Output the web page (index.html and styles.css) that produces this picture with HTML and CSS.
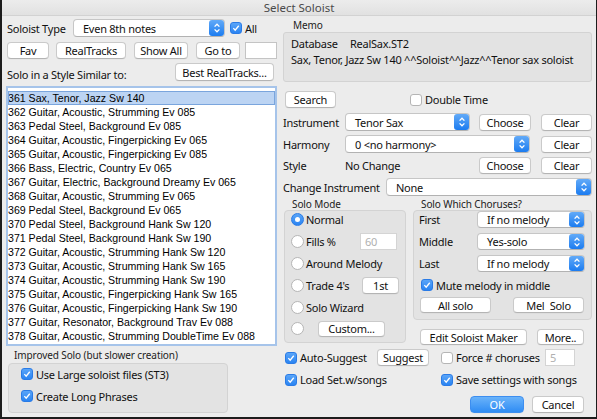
FILE: index.html
```html
<!DOCTYPE html>
<html><head><meta charset="utf-8"><title>Select Soloist</title><link rel="stylesheet" href="styles.css"></head>
<body>
<div class="window">
  <div class="titlebar">Select Soloist</div>
  <div class="main">
    <div class="left">
      <div class="row r1">
        <span class="lbl type-lbl">Soloist Type</span>
        <div class="select s-type"><span class="val">Even 8th notes</span><span class="stepper"><svg viewBox="0 0 10 16" width="10" height="16"><path d="M2.6 6.6 L5 4.2 L7.4 6.6 M2.6 9.4 L5 11.8 L7.4 9.4" fill="none" stroke="#fff" stroke-width="1.3"/></svg></span></div>
        <span class="cb on all-cb"><svg viewBox="0 0 12 12"><path d="M2.8 6.2 L5 8.6 L9.3 3.3" fill="none" stroke="#fff" stroke-width="1.6"/></svg></span><span class="cbtext">All</span>
      </div>
      <div class="row r2">
        <div class="btn b-fav">Fav</div>
        <div class="btn b-rt">RealTracks</div>
        <div class="btn b-show">Show All</div>
        <div class="btn b-goto">Go to</div>
        <span class="field f-goto"></span>
      </div>
      <div class="row r3">
        <span class="lbl">Solo in a Style Similar to:</span>
        <div class="btn b-best">Best RealTracks...</div>
      </div>
      <div class="list">
        <div class="item sel">361 Sax, Tenor, Jazz Sw 140</div>
        <div class="item">362 Guitar, Acoustic, Strumming Ev 085</div>
        <div class="item">363 Pedal Steel, Background Ev 085</div>
        <div class="item">364 Guitar, Acoustic, Fingerpicking Ev 065</div>
        <div class="item">365 Guitar, Acoustic, Fingerpicking Ev 085</div>
        <div class="item">366 Bass, Electric, Country Ev 065</div>
        <div class="item">367 Guitar, Electric, Background Dreamy Ev 065</div>
        <div class="item">368 Guitar, Acoustic, Strumming Ev 065</div>
        <div class="item">369 Pedal Steel, Background Ev 065</div>
        <div class="item">370 Pedal Steel, Background Hank Sw 120</div>
        <div class="item">371 Pedal Steel, Background Hank Sw 190</div>
        <div class="item">372 Guitar, Acoustic, Strumming Hank Sw 120</div>
        <div class="item">373 Guitar, Acoustic, Strumming Hank Sw 165</div>
        <div class="item">374 Guitar, Acoustic, Strumming Hank Sw 190</div>
        <div class="item">375 Guitar, Acoustic, Fingerpicking Hank Sw 165</div>
        <div class="item">376 Guitar, Acoustic, Fingerpicking Hank Sw 190</div>
        <div class="item">377 Guitar, Resonator, Background Trav Ev 088</div>
        <div class="item">378 Guitar, Acoustic, Strumming DoubleTime Ev 088</div>
      </div>
      <div class="glbl imp-lbl">Improved Solo (but slower creation)</div>
      <div class="group improved">
        <div class="crow"><span class="cb on"><svg viewBox="0 0 12 12"><path d="M2.8 6.2 L5 8.6 L9.3 3.3" fill="none" stroke="#fff" stroke-width="1.6"/></svg></span><span class="cbtext">Use Large soloist files (ST3)</span></div>
        <div class="crow"><span class="cb on"><svg viewBox="0 0 12 12"><path d="M2.8 6.2 L5 8.6 L9.3 3.3" fill="none" stroke="#fff" stroke-width="1.6"/></svg></span><span class="cbtext">Create Long Phrases</span></div>
      </div>
    </div>

    <div class="right">
      <div class="glbl memo-lbl">Memo</div>
      <div class="memo">
        <div class="mline"><span class="db">Database</span>RealSax.ST2</div>
        <div class="mline">Sax, Tenor, Jazz Sw 140 ^^Soloist^^Jazz^^Tenor sax soloist</div>
      </div>
      <div class="row search-row">
        <div class="btn b-search">Search</div>
        <span class="cb dt-cb"></span><span class="cbtext">Double Time</span>
      </div>
      <div class="row frow f-instr">
        <span class="flbl">Instrument</span>
        <div class="select s-instr"><span class="val">Tenor Sax</span><span class="stepper"><svg viewBox="0 0 10 16" width="10" height="16"><path d="M2.6 6.6 L5 4.2 L7.4 6.6 M2.6 9.4 L5 11.8 L7.4 9.4" fill="none" stroke="#fff" stroke-width="1.3"/></svg></span></div>
        <div class="btn b-choose">Choose</div>
        <div class="btn b-clear">Clear</div>
      </div>
      <div class="row frow f-harm">
        <span class="flbl">Harmony</span>
        <div class="select s-harm"><span class="val">0 &lt;no harmony&gt;</span><span class="stepper"><svg viewBox="0 0 10 16" width="10" height="16"><path d="M2.6 6.6 L5 4.2 L7.4 6.6 M2.6 9.4 L5 11.8 L7.4 9.4" fill="none" stroke="#fff" stroke-width="1.3"/></svg></span></div>
        <div class="btn b-clear">Clear</div>
      </div>
      <div class="row frow f-style">
        <span class="flbl">Style</span>
        <span class="nochange">No Change</span>
        <div class="btn b-choose">Choose</div>
        <div class="btn b-clear">Clear</div>
      </div>
      <div class="row frow f-change">
        <span class="flbl wide">Change Instrument</span>
        <div class="select s-change"><span class="val">None</span><span class="stepper"><svg viewBox="0 0 10 16" width="10" height="16"><path d="M2.6 6.6 L5 4.2 L7.4 6.6 M2.6 9.4 L5 11.8 L7.4 9.4" fill="none" stroke="#fff" stroke-width="1.3"/></svg></span></div>
      </div>
      <div class="cols">
        <div class="modecol">
          <div class="glbl">Solo Mode</div>
          <div class="group modebox">
            <div class="mrow"><span class="radio on"></span><span class="rtext">Normal</span></div>
            <div class="mrow"><span class="radio"></span><span class="rtext">Fills %</span><span class="field dis f-fills">60</span></div>
            <div class="mrow"><span class="radio"></span><span class="rtext">Around Melody</span></div>
            <div class="mrow"><span class="radio"></span><span class="rtext">Trade 4's</span><div class="btn b-1st">1st</div></div>
            <div class="mrow"><span class="radio"></span><span class="rtext">Solo Wizard</span></div>
            <div class="mrow"><span class="radio"></span><div class="btn b-custom">Custom...</div></div>
          </div>
        </div>
        <div class="chcol">
          <div class="glbl">Solo Which Choruses?</div>
          <div class="group chbox">
            <div class="mrow"><span class="chlbl">First</span><div class="select s-ch"><span class="val">If no melody</span><span class="stepper"><svg viewBox="0 0 10 16" width="10" height="16"><path d="M2.6 6.6 L5 4.2 L7.4 6.6 M2.6 9.4 L5 11.8 L7.4 9.4" fill="none" stroke="#fff" stroke-width="1.3"/></svg></span></div></div>
            <div class="mrow"><span class="chlbl">Middle</span><div class="select s-ch"><span class="val">Yes-solo</span><span class="stepper"><svg viewBox="0 0 10 16" width="10" height="16"><path d="M2.6 6.6 L5 4.2 L7.4 6.6 M2.6 9.4 L5 11.8 L7.4 9.4" fill="none" stroke="#fff" stroke-width="1.3"/></svg></span></div></div>
            <div class="mrow"><span class="chlbl">Last</span><div class="select s-ch"><span class="val">If no melody</span><span class="stepper"><svg viewBox="0 0 10 16" width="10" height="16"><path d="M2.6 6.6 L5 4.2 L7.4 6.6 M2.6 9.4 L5 11.8 L7.4 9.4" fill="none" stroke="#fff" stroke-width="1.3"/></svg></span></div></div>
            <div class="mrow mute"><span class="cb on"><svg viewBox="0 0 12 12"><path d="M2.8 6.2 L5 8.6 L9.3 3.3" fill="none" stroke="#fff" stroke-width="1.6"/></svg></span><span class="cbtext">Mute melody in middle</span></div>
            <div class="brow"><div class="btn b-all">All solo</div><div class="btn b-mel">Mel&nbsp; Solo</div></div>
          </div>
          <div class="row editrow"><div class="btn b-edit">Edit Soloist Maker</div><div class="btn b-more">More..</div></div>
        </div>
      </div>
      <div class="row opt-row">
        <span class="opt o-auto"><span class="cb on"><svg viewBox="0 0 12 12"><path d="M2.8 6.2 L5 8.6 L9.3 3.3" fill="none" stroke="#fff" stroke-width="1.6"/></svg></span><span class="cbtext">Auto-Suggest</span></span>
        <div class="btn b-suggest">Suggest</div>
        <span class="opt o-force"><span class="cb"></span><span class="cbtext">Force # choruses</span></span>
        <span class="field dis f-force">5</span>
      </div>
      <div class="row opt-row load-row">
        <span class="opt o-load"><span class="cb on"><svg viewBox="0 0 12 12"><path d="M2.8 6.2 L5 8.6 L9.3 3.3" fill="none" stroke="#fff" stroke-width="1.6"/></svg></span><span class="cbtext">Load Set.w/songs</span></span>
        <span class="opt"><span class="cb on"><svg viewBox="0 0 12 12"><path d="M2.8 6.2 L5 8.6 L9.3 3.3" fill="none" stroke="#fff" stroke-width="1.6"/></svg></span><span class="cbtext">Save settings with songs</span></span>
      </div>
      <div class="row okrow">
        <div class="btn b-ok">OK</div>
        <div class="btn b-cancel">Cancel</div>
      </div>
    </div>
  </div>
</div>
</body></html>
```
FILE: styles.css
```css
* { box-sizing: border-box; }
html, body { margin: 0; padding: 0; }
body {
  width: 597px; height: 419px; overflow: hidden; background: #ececec;
  font-family: "Noto Sans", "Open Sans", "DejaVu Sans", sans-serif;
  font-size: 11px; letter-spacing: -0.25px; color: #111;
}
.window {
  width: 597px; height: 419px; background: #ececec;
  border-left: 2px solid #1c1c1c; border-right: 1px solid #1c1c1c; border-bottom: 2px solid #1c1c1c;
  display: flex; flex-direction: column;
}
.titlebar {
  height: 16px; flex: none; text-align: center; line-height: 16px;
  font-size: 11.5px; color: #4a4a4a; letter-spacing: 0;
  background: linear-gradient(#ececec, #e1e1e1);
  border-bottom: 1px solid #d2d2d2;
}
.main { display: flex; padding: 3px 0 0 4px; flex: 1; }
.left { width: 272px; flex: none; display: flex; flex-direction: column; }
.right { width: 309px; margin-left: 5px; flex: none; display: flex; flex-direction: column; }

.row { display: flex; align-items: center; flex: none; }
.lbl { white-space: nowrap; }

/* buttons */
.btn {
  height: 17px; display: flex; align-items: center; justify-content: center;
  background: #fff; border: 1px solid #cacaca; border-bottom-color: #b4b4b4;
  border-radius: 4px; white-space: nowrap; flex: none; color: #111;
  box-shadow: 0 0.5px 0 rgba(0,0,0,0.05);
}
.field {
  height: 17px; background: #fff; border: 1px solid #c4c4c4; flex: none;
  display: flex; align-items: center; padding-left: 4px;
}
.field.dis { color: #b0b0b0; border-color: #d4d4d4; }

/* select */
.select {
  height: 18px; background: #fff; border: 1px solid #c6c6c6; border-bottom-color: #b2b2b2;
  border-radius: 4px; display: flex; align-items: center; flex: none;
}
.select .val { flex: 1; padding-left: 9px; white-space: nowrap; }
.select .stepper {
  width: 15px; height: 16px; border-radius: 3px;
  background: linear-gradient(#62aaf8, #1c7cf0);
  display: flex; align-items: center; justify-content: center; flex: none;
}

/* checkbox / radio */
.cb {
  width: 12px; height: 12px; border-radius: 3px; flex: none;
  background: #fff; border: 1px solid #b5b5b5; display: inline-flex;
}
.cb.on { background: linear-gradient(#5aa5f8, #2a84f2); border-color: #2a7be6; }
.cb svg { width: 10px; height: 10px; }
.cbtext { margin-left: 3px; white-space: nowrap; }
.radio {
  width: 13px; height: 13px; border-radius: 50%; background: #fff; border: 1px solid #b5b5b5; flex: none;
  display: inline-flex; align-items: center; justify-content: center;
}
.radio.on { background: linear-gradient(#5aa5f8, #2a84f2); border-color: #2a7be6; }
.radio.on::after { content: ""; width: 5px; height: 5px; border-radius: 50%; background: #fff; }
.rtext { margin-left: 2px; white-space: nowrap; }

/* left column */
.r1 { height: 18px; }
.type-lbl { width: 67px; padding-left: 1px; }
.s-type { width: 152px; }
.all-cb { margin-left: 5px; }
.r2 { height: 17px; margin-top: 5px; }
.b-fav { width: 42px; margin-left: 1px; }
.b-rt { width: 70px; margin-left: 7px; }
.b-show { width: 54px; margin-left: 8px; }
.b-goto { width: 44px; margin-left: 8px; }
.f-goto { width: 32px; margin-left: 5px; }
.r3 { height: 18px; margin-top: 4px; justify-content: space-between; align-items: flex-end; }
.r3 .lbl { padding-left: 1px; line-height: 13px; }
.b-best { width: 99px; height: 18px; margin-right: 4px; }

.list {
  margin-top: 5px; height: 260px; width: 271px; background: #fff;
  border: 2px solid #a6c4ea; padding-top: 3px; overflow: hidden;
  font-family: "Liberation Sans", Arial, sans-serif; font-size: 10.6px; letter-spacing: 0;
}
.item { height: 14px; line-height: 14px; white-space: nowrap; color: #000; }
.item.sel { background: #bcd4f3; outline: 1px solid #7aa5dd; outline-offset: -1px; }

.glbl { font-size: 10px; color: #222; white-space: nowrap; line-height: 11px; letter-spacing: -0.1px; }
.imp-lbl { margin-top: 3px; padding-left: 8px; height: 13px; line-height: 13px; }
.group { background: #e3e3e3; border: 1px solid #d3d3d3; border-radius: 4px; }
.improved { margin-top: 1px; margin-left: 2px; width: 220px; height: 50px; padding-left: 12px; }
.crow { height: 22px; display: flex; align-items: center; }
.improved .crow:first-child { margin-top: -1px; }

/* right column */
.memo-lbl { height: 13px; line-height: 13px; padding-left: 10px; }
.memo {
  height: 50px; background: #e3e3e3; border: 1px solid #d3d3d3; border-radius: 3px;
  padding: 3px 0 0 7px;
}
.mline { height: 16px; line-height: 16px; white-space: nowrap; }
.db { display: inline-block; width: 59px; }
.search-row { margin-top: 9px; height: 17px; }
.b-search { width: 51px; margin-left: 2px; }
.dt-cb { margin-left: 74px; }
.frow { height: 18px; margin-top: 4px; }
.f-instr { margin-top: 5px; }
.flbl { width: 62px; white-space: nowrap; flex: none; }
.flbl.wide { width: 103px; }
.s-instr { width: 125px; }
.b-choose { width: 52px; margin-left: 9px; }
.b-clear { width: 51px; margin-left: 10px; }
.s-harm { width: 185px; }
.f-harm .b-clear { margin-left: 11px; }
.nochange { width: 125px; flex: none; }
.f-style { height: 17px; }
.s-change { width: 206px; }

.cols { display: flex; align-items: flex-start; margin-top: 3px; }
.modecol { width: 122px; margin-left: 1px; flex: none; }
.modecol .glbl, .chcol .glbl { height: 11px; padding-left: 8px; }
.modebox { height: 133px; padding-left: 6px; padding-right: 8px; }
.mrow { height: 21.8px; display: flex; align-items: center; }
.modebox .mrow:first-child, .chbox .mrow:first-child { margin-top: -2px; }
.f-fills { width: 37px; margin-left: auto; }
.b-1st { width: 37px; margin-left: auto; margin-right: -2px; }
.b-custom { width: 67px; margin-left: 14px; height: 16px; }
.chcol { width: 179px; margin-left: 7px; flex: none; }
.chbox { height: 110px; padding-left: 5px; }
.chlbl { width: 58px; flex: none; }
.s-ch { width: 108px; height: 17px; }
.s-ch .stepper { height: 15px; }
.mute { padding-left: 2px; }
.brow { display: flex; margin-top: 1px; }
.b-all { width: 71px; height: 16px; margin-left: 1px; }
.b-mel { width: 71px; height: 16px; margin-left: 22px; }
.editrow { margin-top: 9px; height: 16px; }
.b-edit { width: 107px; height: 16px; margin-left: 7px; }
.b-more { width: 47px; height: 16px; margin-left: 10px; }

.opt-row { margin-top: 4px; height: 17px; }
.load-row { margin-top: 5px; }
.opt { display: flex; align-items: center; flex: none; }
.o-auto { width: 92px; margin-left: 2px; }
.b-suggest { width: 52px; }
.o-force { width: 104px; margin-left: 12px; }
.f-force { width: 30px; }
.o-load { width: 156px; margin-left: 2px; }
.okrow { margin-top: 8px; height: 17px; justify-content: flex-end; padding-right: 8px; }
.b-ok { width: 54px; color: #fff; border-color: #3d8ef0; background: linear-gradient(#6ab3fa, #2f8cf4); }
.b-cancel { width: 52px; margin-left: 8px; }
```
